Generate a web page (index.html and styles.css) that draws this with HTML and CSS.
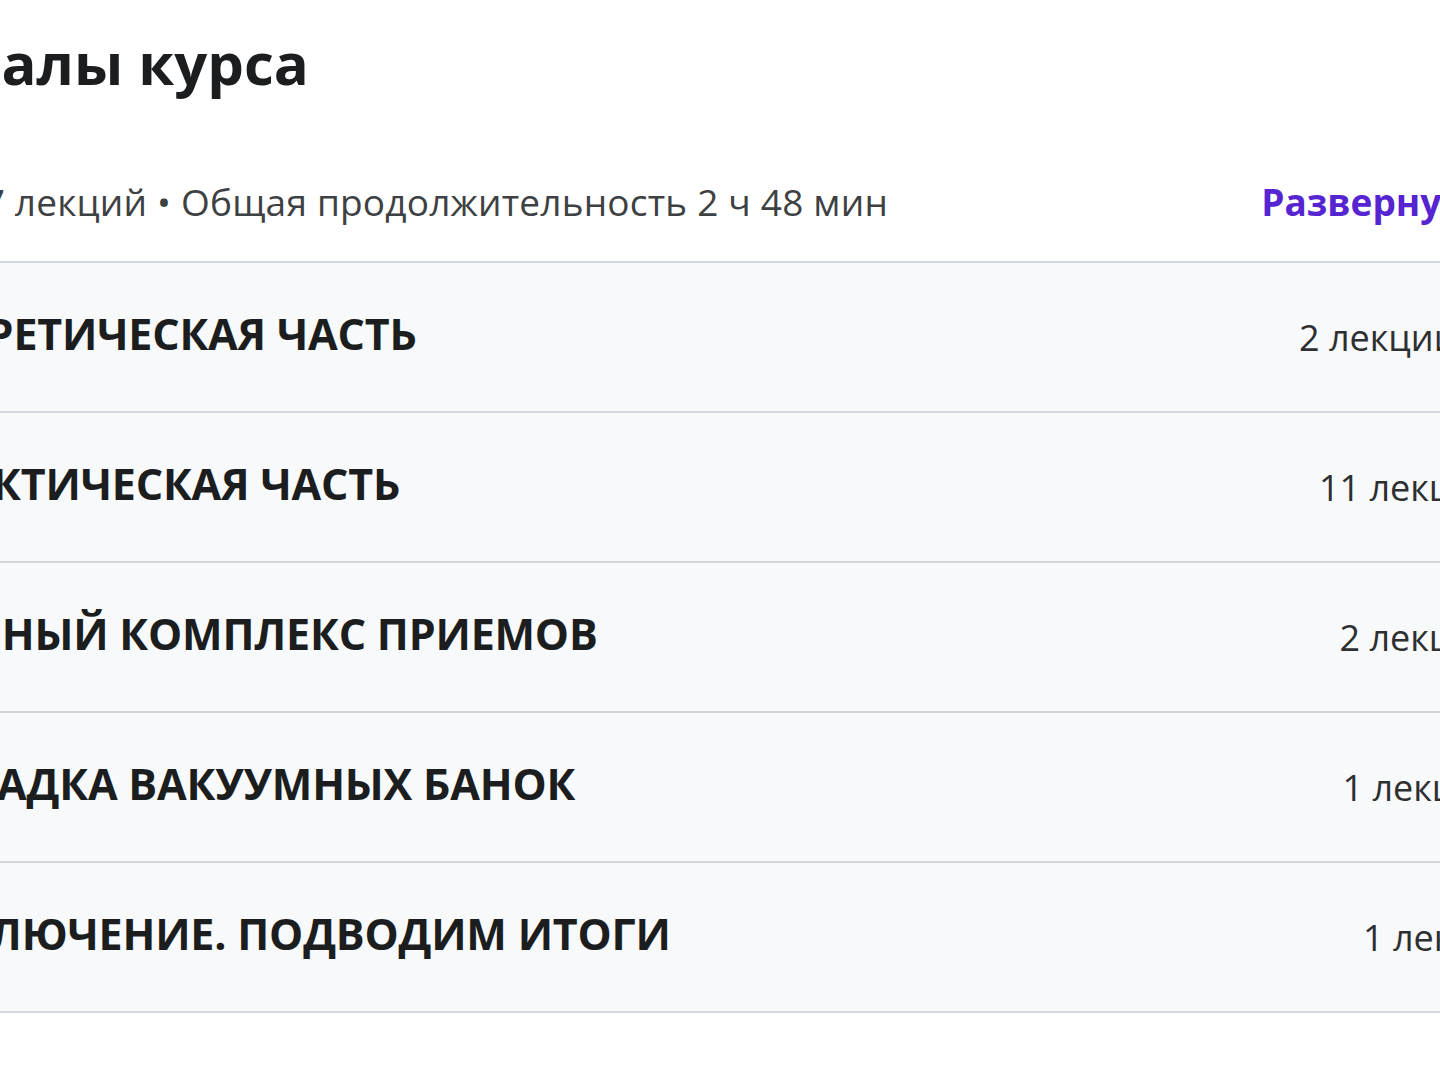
FILE: index.html
```html
<!DOCTYPE html>
<html lang="ru">
<head>
<meta charset="utf-8">
<title>Материалы курса</title>
<link rel="stylesheet" href="styles.css">
</head>
<body>
<main class="curriculum">
  <h2 class="curriculum-title">Материалы курса</h2>
  <div class="summary-row">
    <span class="summary">5 разделов • 17 лекций • Общая продолжительность 2 ч 48 мин</span>
    <button class="expand-all" type="button">Развернуть все разделы</button>
  </div>
  <div class="sections">
    <div class="section">
      <svg class="chevron" viewBox="0 0 24 24" aria-hidden="true"><path d="M6 9l6 6 6-6" fill="none" stroke="#2d2f31" stroke-width="2.5" stroke-linecap="round" stroke-linejoin="round"/></svg>
      <span class="section-title">ТЕОРЕТИЧЕСКАЯ ЧАСТЬ</span>
      <span class="section-meta">2 лекции • 1 ч 4 мин</span>
    </div>
    <div class="section">
      <svg class="chevron" viewBox="0 0 24 24" aria-hidden="true"><path d="M6 9l6 6 6-6" fill="none" stroke="#2d2f31" stroke-width="2.5" stroke-linecap="round" stroke-linejoin="round"/></svg>
      <span class="section-title">ПРАКТИЧЕСКАЯ ЧАСТЬ</span>
      <span class="section-meta">11 лекций • 48 мин</span>
    </div>
    <div class="section">
      <svg class="chevron" viewBox="0 0 24 24" aria-hidden="true"><path d="M6 9l6 6 6-6" fill="none" stroke="#2d2f31" stroke-width="2.5" stroke-linecap="round" stroke-linejoin="round"/></svg>
      <span class="section-title">ПОЛНЫЙ КОМПЛЕКС ПРИЕМОВ</span>
      <span class="section-meta">2 лекции • 36 мин</span>
    </div>
    <div class="section">
      <svg class="chevron" viewBox="0 0 24 24" aria-hidden="true"><path d="M6 9l6 6 6-6" fill="none" stroke="#2d2f31" stroke-width="2.5" stroke-linecap="round" stroke-linejoin="round"/></svg>
      <span class="section-title">ПОСАДКА ВАКУУМНЫХ БАНОК</span>
      <span class="section-meta">1 лекция • 16 мин</span>
    </div>
    <div class="section">
      <svg class="chevron" viewBox="0 0 24 24" aria-hidden="true"><path d="M6 9l6 6 6-6" fill="none" stroke="#2d2f31" stroke-width="2.5" stroke-linecap="round" stroke-linejoin="round"/></svg>
      <span class="section-title">ЗАКЛЮЧЕНИЕ. ПОДВОДИМ ИТОГИ</span>
      <span class="section-meta">1 лекция • 4 мин</span>
    </div>
  </div>
</main>
</body>
</html>
```

FILE: styles.css
```css
html, body {
  margin: 0;
  padding: 0;
  background: #ffffff;
  overflow: hidden;
}

body {
  font-family: "Open Sans", "Noto Sans", "DejaVu Sans", sans-serif;
  color: #2d2f31;
}

.curriculum {
  margin-left: -230px;
  width: 1966px;
  padding-top: 28px;
}

.curriculum-title {
  margin: 0 0 0 -3px;
  font-size: 58px;
  line-height: 1.2;
  font-weight: 700;
  color: #1c1d1f;
  letter-spacing: 0;
}

.summary-row {
  display: flex;
  align-items: baseline;
  justify-content: space-between;
  margin-top: 78px;
  margin-bottom: 34px;
}

.summary {
  margin-left: -42px;
  font-size: 37px;
  line-height: 1.4;
  letter-spacing: 0.2px;
  color: #3e4143;
}

.expand-all {
  border: 0;
  background: none;
  padding: 0;
  font-family: inherit;
  font-size: 37px;
  line-height: 1.4;
  font-weight: 700;
  color: #5624d0;
  cursor: pointer;
}

.sections {
  display: flex;
  flex-direction: column;
}

.section {
  box-sizing: border-box;
  display: flex;
  align-items: center;
  min-height: 150px;
  padding: 0 84px 0 54px;
  background: #f7f9fa;
  border-top: 2px solid #d1d7dc;
}

.section:last-child {
  min-height: 152px;
  border-bottom: 2px solid #d1d7dc;
}

.chevron {
  width: 40px;
  height: 40px;
  flex: none;
  margin-right: 40px;
}

.section-title {
  flex: 1;
  margin-bottom: 8px;
  font-size: 43px;
  font-weight: 700;
  letter-spacing: -0.2px;
  color: #1c1d1f;
}

.section-meta {
  flex: none;
  margin-left: 40px;
  font-size: 36px;
  color: #2d2f31;
}
```
